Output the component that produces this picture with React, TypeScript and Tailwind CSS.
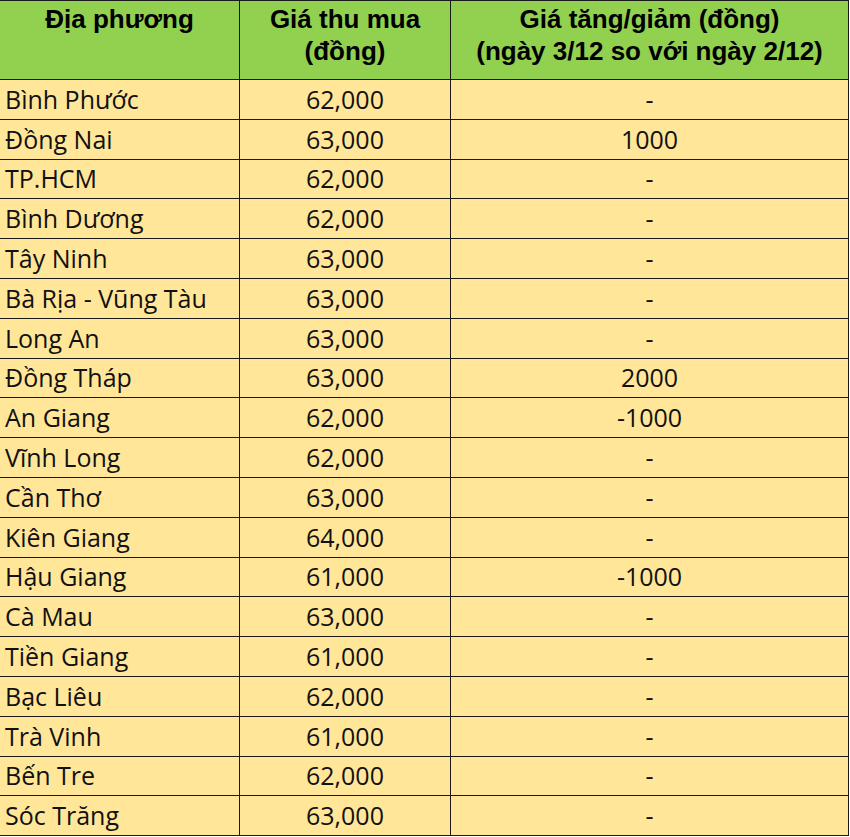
const rows: [string, string, string][] = [
  ["Bình Phước", "62,000", "-"],
  ["Đồng Nai", "63,000", "1000"],
  ["TP.HCM", "62,000", "-"],
  ["Bình Dương", "62,000", "-"],
  ["Tây Ninh", "63,000", "-"],
  ["Bà Rịa - Vũng Tàu", "63,000", "-"],
  ["Long An", "63,000", "-"],
  ["Đồng Tháp", "63,000", "2000"],
  ["An Giang", "62,000", "-1000"],
  ["Vĩnh Long", "62,000", "-"],
  ["Cần Thơ", "63,000", "-"],
  ["Kiên Giang", "64,000", "-"],
  ["Hậu Giang", "61,000", "-1000"],
  ["Cà Mau", "63,000", "-"],
  ["Tiền Giang", "61,000", "-"],
  ["Bạc Liêu", "62,000", "-"],
  ["Trà Vinh", "61,000", "-"],
  ["Bến Tre", "62,000", "-"],
  ["Sóc Trăng", "63,000", "-"],
];

export default function App() {
  return (
    <div className="w-[850px] h-[837px] bg-white overflow-hidden">
      <table className="border-collapse table-fixed w-[849px] -ml-px">
        <colgroup>
          <col className="w-[240px]" />
          <col className="w-[211px]" />
          <col className="w-[398px]" />
        </colgroup>
        <thead>
          <tr className="bg-[#92d050] h-[79px] text-black font-bold text-[26px] leading-[32px] font-['Liberation_Sans',Arial,sans-serif]">
            <th className="border border-[#1a1a1a] align-top pt-[2px] text-center">Địa phương</th>
            <th className="border border-[#1a1a1a] align-top pt-[2px] text-center">
              Giá thu mua
              <br />
              (đồng)
            </th>
            <th className="border border-[#1a1a1a] align-top pt-[2px] text-center">
              Giá tăng/giảm (đồng)
              <br />
              (ngày 3/12 so với ngày 2/12)
            </th>
          </tr>
        </thead>
        <tbody className="font-['Open_Sans','Noto_Sans',sans-serif] text-[25px] text-[#111]">
          {rows.map(([place, price, change]) => (
            <tr key={place} className="bg-[#ffe699] h-[39.8px]">
              <td className="border border-[#1a1a1a] pl-[5px] leading-none">{place}</td>
              <td className="border border-[#1a1a1a] text-center leading-none">{price}</td>
              <td className="border border-[#1a1a1a] text-center leading-none">{change}</td>
            </tr>
          ))}
        </tbody>
      </table>
    </div>
  );
}
